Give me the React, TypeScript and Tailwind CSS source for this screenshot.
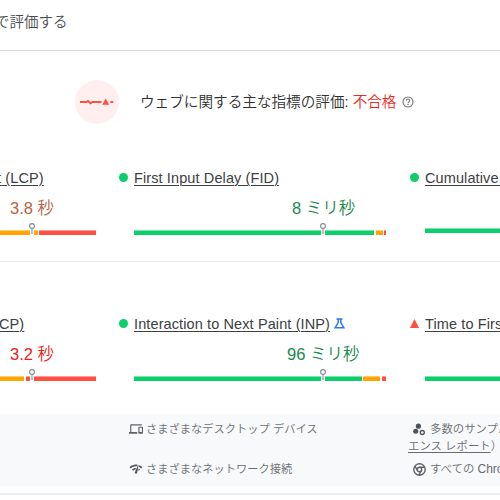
import React from 'react';

type Segment = { width: string; color: string };

const GREEN = 'bg-[#0cce6b]';
const ORANGE = 'bg-[#ffa400]';
const RED = 'bg-[#ff4e42]';
const GAP = 'bg-white';

function Pin({ className }: { className: string }) {
  return (
    <svg className={`absolute -top-[7px] h-[12px] w-[8px] ${className}`} viewBox="0 0 8 12" fill="none">
      <path d="M2 7h4v5H2z" fill="#fff" />
      <circle cx="4" cy="3" r="2.4" fill="#fff" stroke="#868a8e" strokeWidth="1.1" />
      <path d="M4 5.5v5.5" stroke="#92969a" strokeWidth="1.2" />
    </svg>
  );
}

function Bar({ segments, pin }: { segments: Segment[]; pin?: string }) {
  return (
    <div className="relative flex h-[5px]">
      {segments.map((s, i) => (
        <span key={i} className={`h-full shrink-0 ${s.width} ${s.color}`} />
      ))}
      <span className="absolute inset-x-0 top-0 h-px bg-white/45" />
      {pin && <Pin className={pin} />}
    </div>
  );
}

function Metric({
  name, nameClass = '', value = '', unit = '', valueClass = '', mark, width, extra, segments, pin, barGap = 'mt-[10px]',
}: {
  name: string; nameClass?: string; value?: string; unit?: string; valueClass?: string; mark?: 'dot' | 'triangle';
  width: string; extra?: React.ReactNode; segments: Segment[]; pin?: string; barGap?: string;
}) {
  return (
    <div className={`flex shrink-0 ${width}`}>
      {mark && (
        <div className="w-[15px] shrink-0 pt-[5px]">
          {mark === 'dot' ? (
            <span className="block size-[9px] rounded-full bg-[#0cce6b]" />
          ) : (
            <svg className="size-[9px]" viewBox="0 0 9 9"><path d="M4.5 0 9 9H0z" fill="#ff4e42" /></svg>
          )}
        </div>
      )}
      <div className="min-w-0 flex-1">
        <div className="flex h-5 items-center whitespace-nowrap text-[14.5px] leading-5 tracking-[0.11px] text-[#3c4043]">
          <span className={`underline decoration-1 underline-offset-2 ${nameClass}`}>{name}</span>
          {extra}
        </div>
        <div className={`mt-[10px] flex h-5 items-center whitespace-nowrap text-[16.5px] leading-5 ${valueClass}`}>
          {value && <span className="whitespace-pre">{value} <span className="font-[350]">{unit}</span></span>}
        </div>
        <div className={barGap}><Bar segments={segments} pin={pin} /></div>
      </div>
    </div>
  );
}

function Flask() {
  return (
    <svg className="mb-[2px] ml-[4px] size-[11px]" viewBox="0 0 11 11" fill="none" stroke="#2b78f5" strokeWidth="1.5">
      <path d="M2.5.9h6M4.2 1v3.5L1.2 9.7h8.6L6.8 4.5V1" />
    </svg>
  );
}

export default function App() {
  return (
    <div className="flex h-[500px] w-[500px] flex-col overflow-hidden bg-white font-['Liberation_Sans','Noto_Sans_CJK_JP',sans-serif]">
      <header className="flex h-[51px] shrink-0 items-center border-b border-[#dadce0] pb-[6px]">
        <span className="-ml-[5px] whitespace-nowrap text-[14.5px] font-[350] leading-5 text-[#4a4d50]">で評価する</span>
      </header>

      <section className="flex h-[102px] shrink-0 items-center pl-[75px]">
        <svg className="size-[44px] shrink-0" viewBox="0 0 44 44" fill="none">
          <circle cx="22" cy="22" r="22" fill="#ffefee" />
          <path d="M5 22h6.5l1.5-1 2.5 2.3 2-1.3H26.5" stroke="#ff4e42" strokeWidth="1.9" />
          <path d="M30.7 18.4 34.2 24.8h-7z" fill="#ff4e42" />
          <path d="M35.3 22h3" stroke="#ff4e42" strokeWidth="1.9" />
        </svg>
        <h1 className="ml-[21px] whitespace-nowrap text-[14.62px] font-[350] leading-5 text-[#303030]">
          ウェブに関する主な指標の評価: <span className="text-[#f0281c]">不合格</span>
        </h1>
        <svg className="ml-[6px] size-[12px] shrink-0" viewBox="0 0 12 12" fill="none" stroke="#757575">
          <circle cx="6" cy="6" r="5" strokeWidth="1.1" />
          <path d="M4.3 4.7c0-2.2 3.4-2.2 3.4 0C7.7 5.8 6 6 6 7.3M6 8.1v1" strokeWidth="1.1" />
        </svg>
      </section>

      <section className="flex h-[109px] shrink-0 border-b border-[#e8eaed] pt-[15px]">
        <Metric
          width="w-[119px]" name="t (LCP)" nameClass="-ml-[3px]" value="3.8" unit="秒" valueClass="pl-[10px] text-[#b7623b]"
          barGap="mt-[12px]" pin="left-[28px]"
          segments={[
            { width: 'w-[29.5px]', color: ORANGE }, { width: 'w-[4.5px]', color: GAP }, { width: 'w-[3.5px]', color: ORANGE },
            { width: 'w-[1.5px]', color: GAP }, { width: 'w-[57px]', color: RED },
          ]}
        />
        <Metric
          mark="dot" width="w-[291px]" name="First Input Delay (FID)" value="8" unit="ミリ秒" valueClass="pl-[158px] text-[#188a4c]"
          barGap="mt-[12px]" pin="left-[185px]"
          segments={[
            { width: 'w-[240px]', color: GREEN }, { width: 'w-[2px]', color: GAP }, { width: 'w-[7px]', color: ORANGE },
            { width: 'w-[1px]', color: GAP }, { width: 'w-[2px]', color: RED },
          ]}
        />
        <Metric
          mark="dot" width="w-[91px]" name="Cumulative Layout Shift (CLS)" segments={[{ width: 'w-[76px]', color: GREEN }]}
        />
      </section>

      <section className="flex h-[152px] shrink-0 pt-[52px]">
        <Metric
          width="w-[119px]" name="CP)" nameClass="-ml-[1px]" value="3.2" unit="秒" valueClass="pl-[10px] text-[#eb2015]"
          barGap="mt-[12px]" pin="left-[28px]"
          segments={[
            { width: 'w-[24px]', color: ORANGE }, { width: 'w-[1.5px]', color: GAP }, { width: 'w-[70.5px]', color: RED },
          ]}
        />
        <Metric
          mark="dot" width="w-[291px]" name="Interaction to Next Paint (INP)" value="96" unit="ミリ秒" valueClass="pl-[153px] text-[#188a4c]"
          extra={<Flask />} barGap="mt-[12px]" pin="left-[185px]"
          segments={[
            { width: 'w-[227.5px]', color: GREEN }, { width: 'w-[1.5px]', color: GAP }, { width: 'w-[17px]', color: ORANGE },
            { width: 'w-[1.5px]', color: GAP }, { width: 'w-[4.5px]', color: RED },
          ]}
        />
        <Metric
          mark="triangle" width="w-[91px]" name="Time to First Byte (TTFB)" barGap="mt-[12px]"
          segments={[{ width: 'w-[76px]', color: GREEN }]}
        />
      </section>

      <section className="flex h-[72px] shrink-0 whitespace-nowrap bg-[#f8f9fb] pt-[6px] font-[350] leading-[18px] text-[#686c71]">
        <div className="flex w-[408px] shrink-0 flex-col gap-[22px] pl-[129px] text-[11.25px]">
          <div className="flex items-center">
            <svg className="mr-[3px] size-[14px]" viewBox="0 0 24 24" fill="#5f6368">
              <path d="M4 6h18V4H4c-1.1 0-2 .9-2 2v11H0v3h14v-3H4V6zm19 2h-6c-.55 0-1 .45-1 1v10c0 .55.45 1 1 1h6c.55 0 1-.45 1-1V9c0-.55-.45-1-1-1zm-1 9h-4v-7h4v7z" />
            </svg>
            さまざまなデスクトップ デバイス
          </div>
          <div className="flex items-center">
            <svg className="mr-[3px] size-[14px]" viewBox="0 0 24 24" fill="#4f5357">
              <path d="M15.9 5c-.17 0-.32.09-.41.23l-.07.15-5.18 11.65c-.16.29-.26.61-.26.96 0 1.11.9 2.01 2.01 2.01.96 0 1.77-.68 1.96-1.59l.01-.03L16.4 5.5c0-.28-.22-.5-.5-.5zM1 9l2 2c2.88-2.88 6.79-4.08 10.53-3.62l1.19-2.68C9.89 3.84 4.74 5.27 1 9zm20 2 2-2c-1.64-1.64-3.55-2.82-5.59-3.57l-.53 2.82c1.5.62 2.9 1.53 4.12 2.75zm-4 4 2-2c-.8-.8-1.7-1.42-2.66-1.89l-.55 2.92c.42.27.83.59 1.21.97zM5 13l2 2c1.13-1.13 2.56-1.79 4.03-2l1.28-2.88c-2.63-.08-5.3.87-7.31 2.88z" />
            </svg>
            さまざまなネットワーク接続
          </div>
        </div>
        <div className="flex flex-col text-[11.4px]">
          <div className="flex items-center">
            <svg className="ml-[5px] mr-[4px] size-[13px]" viewBox="0 0 13 13" fill="#4f5357">
              <circle cx="5.4" cy="3.2" r="2.6" /><circle cx="2.7" cy="8.3" r="2.5" />
              <circle cx="9.3" cy="9.5" r="2" fill="none" stroke="#4f5357" strokeWidth="1.3" />
            </svg>
            多数のサンプル
          </div>
          <div className="-mt-px"><span className="underline decoration-1 underline-offset-2">エンス レポート</span>）</div>
          <div className="mt-[5px] flex items-center">
            <svg className="ml-[5px] mr-[4px] size-[13px]" viewBox="0 0 13 13" fill="none" stroke="#5f6368" strokeWidth="1.4">
              <circle cx="6.5" cy="6.5" r="5.7" /><circle cx="6.5" cy="6.5" r="2.2" />
              <path d="M6.5 4.3h5.3M4.6 7.6 1.9 3.1M8.4 7.6l-2.6 4.5" />
            </svg>
            <span>すべての <span className="text-[12px]">Chrome</span></span>
          </div>
        </div>
      </section>

      <footer className="mt-[7px] h-[2px] shrink-0 bg-[#ececec]" />
    </div>
  );
}
